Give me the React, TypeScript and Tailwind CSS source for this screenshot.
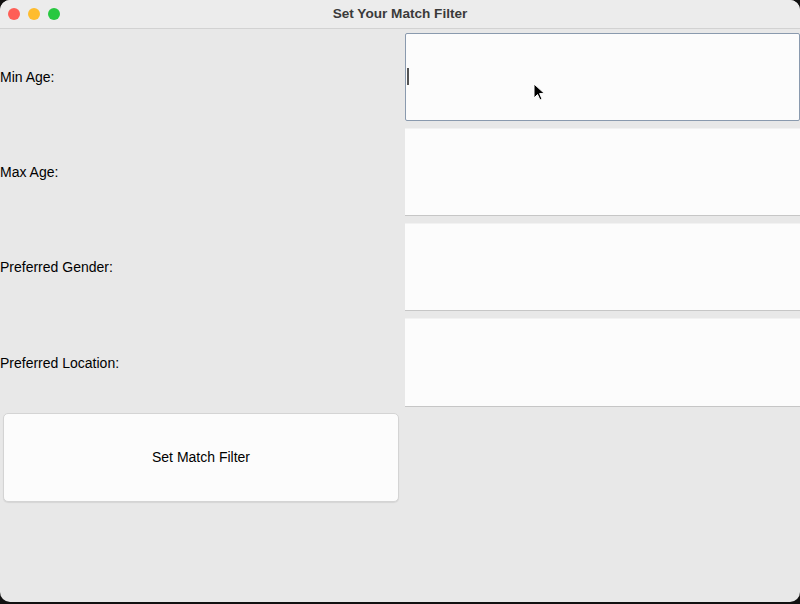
import React from "react";

const fields = ["Min Age:", "Max Age:", "Preferred Gender:", "Preferred Location:"];

export default function App() {
  return (
    <div className="w-[800px] h-[604px] bg-[#111] overflow-hidden" style={{ fontFamily: '"Liberation Sans", Arial, sans-serif' }}>
      <div className="relative w-[800px] h-[602px] rounded-[10px] overflow-hidden bg-[#e8e8e8] flex flex-col">
        {/* title bar */}
        <div className="relative h-[29px] shrink-0 bg-[#ececec] border-b border-[#d2d2d2] flex items-center">
          <div className="flex items-center gap-[8px] pl-[8px]">
            <span className="w-[12px] h-[12px] rounded-full bg-[#fe5f57]" />
            <span className="w-[12px] h-[12px] rounded-full bg-[#febc2e]" />
            <span className="w-[12px] h-[12px] rounded-full bg-[#28c840]" />
          </div>
          <div className="absolute inset-0 flex items-center justify-center text-[13.6px] font-bold text-[#3a3a3a]">
            Set Your Match Filter
          </div>
        </div>

        {/* form grid */}
        <div className="grid grid-cols-[402px_398px] grid-rows-[95px_95px_95px_96px_94px]">
          {fields.map((label, i) => (
            <React.Fragment key={label}>
              <div className="flex items-center text-[14px] text-black pt-[2px]">{label}</div>
              <div className="pl-[3px] pt-[4px] pb-[3px]">
                {i === 0 ? (
                  <div className="relative h-full bg-[#fcfcfc] border border-[#8a9aae] rounded-[2px]">
                    <span className="absolute left-[1px] top-[34px] w-[2px] h-[17px] bg-[#555]" />
                  </div>
                ) : (
                  <div className="h-full bg-[#fcfcfc] border-t border-[#f2f2f2] border-b border-b-[#c6c6c6]" />
                )}
              </div>
            </React.Fragment>
          ))}
          <div className="pl-[3px] pr-[3px] pt-[3px] pb-[2px]">
            <button className="w-full h-full bg-[#fcfcfc] border border-[#d4d4d4] rounded-[5px] shadow-[0_1px_1px_rgba(0,0,0,0.08)] text-[14px] text-black">
              Set Match Filter
            </button>
          </div>
          <div />
        </div>

        {/* mouse pointer */}
        <svg className="absolute left-[533px] top-[83px]" width="14" height="20" viewBox="0 0 14 20">
          <path d="M1 1 L1 15 L4.5 11.5 L7 17 L9 16 L6.6 10.6 L11.5 10.6 Z" fill="#000" stroke="#fff" strokeWidth="1" />
        </svg>
      </div>
    </div>
  );
}
